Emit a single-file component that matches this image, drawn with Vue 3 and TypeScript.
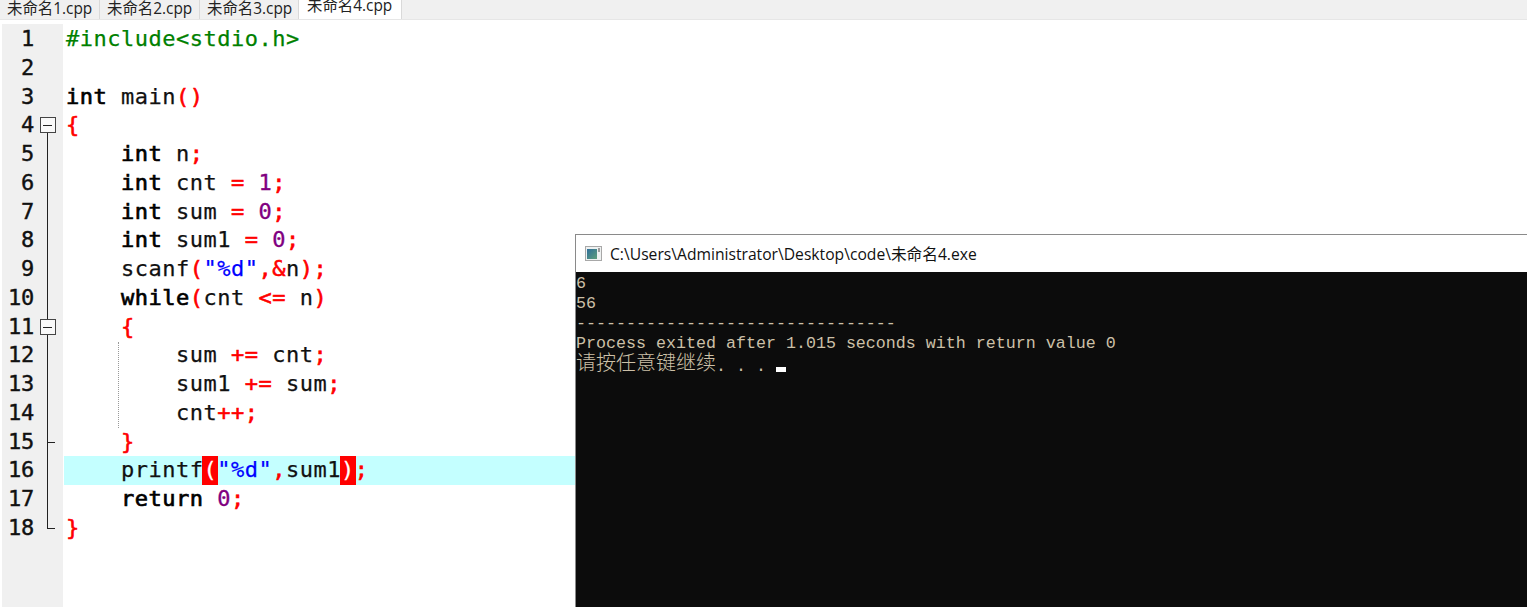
<script setup lang="ts">
type Tok = { t: string; c?: string };
const tabs = ['未命名1.cpp', '未命名2.cpp', '未命名3.cpp', '未命名4.cpp'];
const k = (t: string): Tok => ({ t, c: 'k' });
const r = (t: string): Tok => ({ t, c: 'r' });
const n = (t: string): Tok => ({ t, c: 'n' });
const p = (t: string): Tok => ({ t });
const s = (t: string): Tok => ({ t, c: 's' });
const lines: Tok[][] = [
  [{ t: '#include<stdio.h>', c: 'g' }],
  [],
  [k('int'), p(' main'), r('()')],
  [r('{')],
  [p('    '), k('int'), p(' n'), r(';')],
  [p('    '), k('int'), p(' cnt '), r('='), p(' '), n('1'), r(';')],
  [p('    '), k('int'), p(' sum '), r('='), p(' '), n('0'), r(';')],
  [p('    '), k('int'), p(' sum1 '), r('='), p(' '), n('0'), r(';')],
  [p('    scanf'), r('('), s('"%d"'), r(',&'), p('n'), r(');')],
  [p('    '), k('while'), r('('), p('cnt '), r('<='), p(' n'), r(')')],
  [p('    '), r('{')],
  [p('        sum '), r('+='), p(' cnt'), r(';')],
  [p('        sum1 '), r('+='), p(' sum'), r(';')],
  [p('        cnt'), r('++;')],
  [p('    '), r('}')],
  [p('    printf'), { t: '(', c: 'b' }, s('"%d"'), r(','), p('sum1'), { t: ')', c: 'b' }, r(';')],
  [p('    '), k('return'), p(' '), n('0'), r(';')],
  [r('}')],
];
const fold = (i: number): string => {
  if (i === 3) return 'box first';
  if (i === 10) return 'box';
  if (i === 14) return 'tee';
  if (i === 17) return 'end';
  if (i > 3 && i < 17) return 'line';
  return '';
};
</script>

<template>
  <div class="page">
    <div class="tabs">
      <div v-for="(t, i) in tabs" :key="t" class="tab" :class="{ active: i === 3 }">{{ t }}</div>
    </div>
    <div class="editor">
      <div class="gutter">
        <div v-for="(l, i) in lines" :key="i" class="gline">
          <span class="num">{{ i + 1 }}</span>
          <span class="fold" :class="fold(i)"></span>
        </div>
      </div>
      <div class="code">
        <div v-for="(l, i) in lines" :key="i" class="cline" :class="{ hl: i === 15 }">
          <span v-for="(tok, j) in l" :key="j" :class="tok.c">{{ tok.t }}</span>
        </div>
        <div class="guide"></div>
      </div>
    </div>
    <div class="console">
      <div class="title">
        <svg class="ico" width="17" height="15" viewBox="0 0 17 15">
          <defs>
            <linearGradient id="ico-fill" x1="0" y1="0" x2="1" y2="1">
              <stop offset="0" stop-color="#2f6f9a" />
              <stop offset="1" stop-color="#5f9f7c" />
            </linearGradient>
          </defs>
          <rect x="0.5" y="0.5" width="16" height="14" fill="#eef1f1" stroke="#a8a8a8" />
          <rect x="2" y="3" width="10" height="10" fill="url(#ico-fill)" />
          <rect x="13" y="2" width="2" height="4" fill="#9c9c9c" />
        </svg>
        <span>C:\Users\Administrator\Desktop\code\未命名4.exe</span>
      </div>
      <div class="term">
        <div>6</div>
        <div>56</div>
        <div>--------------------------------</div>
        <div>Process exited after 1.015 seconds with return value 0</div>
        <div class="last"><span class="cjk">请按任意键继续</span>. . . <span class="cursor"></span></div>
      </div>
    </div>
  </div>
</template>

<style>
html, body { margin: 0; background: #fff; overflow: hidden; }
</style>

<style scoped>
.page {
  position: relative;
  width: 1527px;
  height: 607px;
  overflow: hidden;
  background: #fff;
}
.tabs {
  display: flex;
  height: 20px;
  box-sizing: border-box;
  background: #f0f0f0;
  border-bottom: 1px solid #e6e6e6;
  overflow: hidden;
}
.tab {
  width: 100px;
  box-sizing: border-box;
  padding-left: 7px;
  border-right: 1px solid #d9d9d9;
  font: 15.4px/17px "Open Sans", "Noto Sans CJK SC", sans-serif;
  color: #222;
  white-space: nowrap;
}
.tab:nth-child(3) { width: 99px; }
.tab.active {
  width: 103px;
  height: 20px;
  background: #fff;
  line-height: 11px;
  padding-left: 8px;
}
.editor {
  display: flex;
  padding: 4px 0 0 2px;
  height: 583px;
}
.gutter {
  width: 61px;
  padding-top: 1px;
  background: #f0f0f0;
  flex: none;
}
.gline {
  display: flex;
  height: 28.76px;
  position: relative;
}
.num {
  width: 32px;
  text-align: right;
  font: 22px/28.4px "DejaVu Sans Mono", monospace;
  letter-spacing: -0.2px;
  color: #111;
  -webkit-text-stroke: 0.4px #111;
}
.fold {
  position: absolute;
  left: 45px;
  top: 0;
  width: 1px;
  height: 100%;
}
.fold.line, .fold.box, .fold.tee, .fold.end { background: #222; }
.fold.box.first {
  top: 14px;
  height: 15px;
}
.fold.box::before {
  content: "";
  position: absolute;
  left: -7px;
  top: 6px;
  width: 14px;
  height: 14px;
  border: 1px solid #444;
  background: #f8f8f8;
}
.fold.box.first::before { top: -8px; }
.fold.box::after {
  content: "";
  position: absolute;
  left: -4px;
  top: 14px;
  width: 9px;
  height: 1px;
  background: #222;
}
.fold.box.first::after { top: 0; }
.fold.tee::after, .fold.end::after {
  content: "";
  position: absolute;
  left: 0;
  top: 14px;
  width: 8px;
  height: 1px;
  background: #222;
}
.fold.end { height: 15px; }
.code {
  position: relative;
  flex: 1;
  min-width: 0;
  margin-left: 1px;
  padding-top: 1px;
}
.cline {
  height: 28.76px;
  padding-left: 2px;
  font: 22px/28.4px "DejaVu Sans Mono", monospace;
  letter-spacing: 0.5px;
  white-space: pre;
  color: #111;
  -webkit-text-stroke: 0.25px #111;
}
.cline.hl { background: #c4ffff; }
.k { color: #000; -webkit-text-stroke: 0.7px #000; }
.r { color: #ff0000; -webkit-text-stroke: 0.6px #ff0000; }
.n { color: #800080; -webkit-text-stroke: 0.35px #800080; }
.s { color: #0000ff; -webkit-text-stroke: 0.25px #0000ff; }
.g { color: #008000; -webkit-text-stroke: 0.25px #008000; }
.b {
  display: inline-block;
  height: 28.76px;
  margin: 0 -1px;
  padding: 0 1px;
  vertical-align: top;
  background: #ff0000;
  color: #fff;
  -webkit-text-stroke: 0.3px #fff;
}
.guide {
  position: absolute;
  left: 54px;
  top: 318px;
  height: 86px;
  border-left: 1px dotted #999;
}
.console {
  position: absolute;
  left: 575px;
  top: 234px;
  width: 960px;
  height: 380px;
  border: 1px solid #8a8a8a;
  box-sizing: border-box;
  background: #0c0c0c;
}
.title {
  height: 37px;
  background: #fff;
  display: flex;
  align-items: center;
  gap: 8px;
  padding-left: 9px;
  font: 15.67px "Open Sans", "Noto Sans CJK SC", sans-serif;
  color: #111;
}
.ico { flex: none; }
.term {
  padding-top: 2px;
  font: 16.67px/20px "Liberation Mono", "Noto Sans CJK SC", monospace;
  color: #ccc0a8;
  white-space: pre;
}
.cjk {
  font-size: 20px;
  font-family: "Noto Sans CJK SC", sans-serif;
  line-height: 18px;
  font-weight: 300;
  vertical-align: 1px;
}
.last { height: 20px; margin-top: -1px; }
.cursor {
  display: inline-block;
  width: 10px;
  height: 5px;
  background: #fff;
  vertical-align: -1px;
}
</style>
